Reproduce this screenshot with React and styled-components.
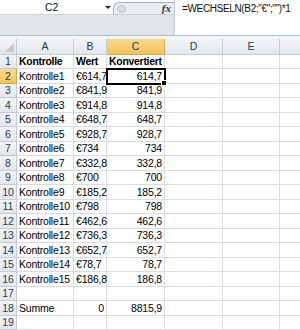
import React from "react";
import styled, { createGlobalStyle } from "styled-components";

const Global = createGlobalStyle`
  html, body { margin: 0; padding: 0; background: #ffffff; }
  body { width: 300px; height: 330px; overflow: hidden; font-family: "Liberation Sans", Arial, sans-serif; }
`;

const Page = styled.div`
  width: 300px;
  height: 330px;
  overflow: hidden;
  background: #ffffff;
  display: flex;
  flex-direction: column;
`;

const FormulaBar = styled.div`
  display: flex;
  height: 44px;
  border-bottom: 1px solid #b6bec9;
  box-sizing: border-box;
`;

const LeftPane = styled.div`
  width: 174px;
  display: flex;
  flex-direction: column;
  background: #e1e4e9;
  border-right: 1px solid #c3c9d1;
`;

const TopRow = styled.div`
  display: flex;
  height: 15px;
  background: #ffffff;
  border-bottom: 1px solid #cdd2d9;
  box-sizing: border-box;
`;

const NameBox = styled.div`
  width: 113px;
  position: relative;
  display: flex;
  align-items: center;
  font-size: 10.5px;
  color: #111;
  padding-left: 45px;
  box-sizing: border-box;
`;

const DropArrow = styled.span`
  position: absolute;
  left: 105px;
  top: 6px;
  width: 0;
  height: 0;
  border-left: 3px solid transparent;
  border-right: 3px solid transparent;
  border-top: 3px solid #222;
`;

const FxBox = styled.div`
  flex: 1;
  display: flex;
  align-items: flex-end;
  background: #ffffff;
`;

const Pill = styled.div`
  flex: 1;
  height: 11px;
  border: 1px solid #a9b1bc;
  border-right: none;
  border-bottom: none;
  border-radius: 6px 0 0 0;
  background: #e9ecf0;
  display: flex;
  align-items: center;
  justify-content: flex-end;
  padding-right: 3px;
  position: relative;
`;

const Knob = styled.span`
  position: absolute;
  left: 3px;
  top: 2px;
  width: 7px;
  height: 6px;
  border-radius: 50%;
  background: #d5dae1;
  border: 1px solid #c2c8d0;
`;

const Fx = styled.span`
  font-family: "Liberation Serif", "Times New Roman", serif;
  font-style: italic;
  font-weight: bold;
  font-size: 11px;
  color: #333;
  line-height: 1;
`;

const FormulaText = styled.div`
  flex: 1;
  background: #ffffff;
  font-size: 10px;
  letter-spacing: -0.35px;
  color: #111;
  padding: 3px 0 0 7px;
  white-space: nowrap;
`;

const Gap = styled.div`
  height: 3px;
  background: #f3f5f7;
`;

const Sheet = styled.div`
  display: grid;
  grid-template-columns: 17px 57px 33px 58px 58px 57px 40px;
  grid-template-rows: 16px;
  grid-auto-rows: 14.5px;
`;

const Cell = styled.div`
  box-sizing: border-box;
  border-right: 1px solid #d9dde3;
  border-bottom: 1px solid #d9dde3;
  font-size: 10.5px;
  font-weight: ${(p) => (p.$bold ? "bold" : "normal")};
  letter-spacing: ${(p) => (p.$bold ? "-0.3px" : "-0.2px")};
  color: #000;
  display: flex;
  align-items: center;
  justify-content: ${(p) => (p.$right ? "flex-end" : "flex-start")};
  padding: 0 2px 0 2px;
  white-space: nowrap;
  overflow: visible;
  position: relative;
`;

const Head = styled.div`
  box-sizing: border-box;
  background: ${(p) =>
    p.$active ? "linear-gradient(#f9d993, #f2c25c)" : "linear-gradient(#f1f3f6, #e3e7ec)"};
  border-right: 1px solid ${(p) => (p.$active ? "#e0a948" : "#c5cbd3")};
  border-bottom: 1px solid ${(p) => (p.$active ? "#e0a948" : "#c5cbd3")};
  color: #2b3b50;
  font-size: 10.5px;
  display: flex;
  align-items: center;
  justify-content: center;
  position: relative;
`;

const Corner = styled(Head)`
  &::after {
    content: "";
    position: absolute;
    right: 2px;
    bottom: 2px;
    width: 0;
    height: 0;
    border-left: 9px solid transparent;
    border-bottom: 9px solid #c8ccd2;
  }
`;

const Selected = styled(Cell)`
  outline: 2px solid #000;
  outline-offset: -1px;
  z-index: 2;
  &::after {
    content: "";
    position: absolute;
    right: -3px;
    bottom: -3px;
    width: 4px;
    height: 4px;
    background: #000;
    border: 1px solid #fff;
  }
`;

const rows = [
  ["Kontrolle1", "€614,7", "614,7"],
  ["Kontrolle2", "€841,9", "841,9"],
  ["Kontrolle3", "€914,8", "914,8"],
  ["Kontrolle4", "€648,7", "648,7"],
  ["Kontrolle5", "€928,7", "928,7"],
  ["Kontrolle6", "€734", "734"],
  ["Kontrolle7", "€332,8", "332,8"],
  ["Kontrolle8", "€700", "700"],
  ["Kontrolle9", "€185,2", "185,2"],
  ["Kontrolle10", "€798", "798"],
  ["Kontrolle11", "€462,6", "462,6"],
  ["Kontrolle12", "€736,3", "736,3"],
  ["Kontrolle13", "€652,7", "652,7"],
  ["Kontrolle14", "€78,7", "78,7"],
  ["Kontrolle15", "€186,8", "186,8"],
];

const Empties = () => (
  <>
    <Cell />
    <Cell />
    <Cell />
  </>
);

export default function App() {
  return (
    <Page>
      <Global />
      <FormulaBar>
        <LeftPane>
          <TopRow>
            <NameBox>
              C2
              <DropArrow />
            </NameBox>
            <FxBox>
              <Pill>
                <Knob />
                <Fx>fx</Fx>
              </Pill>
            </FxBox>
          </TopRow>
        </LeftPane>
        <FormulaText>=WECHSELN(B2;"€";"")*1</FormulaText>
      </FormulaBar>
      <Gap />
      <Sheet>
        <Corner />
        <Head>A</Head>
        <Head>B</Head>
        <Head $active>C</Head>
        <Head>D</Head>
        <Head>E</Head>
        <Head />

        <Head>1</Head>
        <Cell $bold>Kontrolle</Cell>
        <Cell $bold>Wert</Cell>
        <Cell $bold>Konvertiert</Cell>
        <Empties />

        {rows.map((r, i) => (
          <React.Fragment key={i}>
            <Head $active={i === 0}>{i + 2}</Head>
            <Cell>{r[0]}</Cell>
            <Cell>{r[1]}</Cell>
            {i === 0 ? <Selected $right>{r[2]}</Selected> : <Cell $right>{r[2]}</Cell>}
            <Empties />
          </React.Fragment>
        ))}

        <Head>17</Head>
        <Cell />
        <Cell />
        <Cell />
        <Empties />

        <Head>18</Head>
        <Cell>Summe</Cell>
        <Cell $right>0</Cell>
        <Cell $right>8815,9</Cell>
        <Empties />

        <Head>19</Head>
        <Cell />
        <Cell />
        <Cell />
        <Empties />
      </Sheet>
    </Page>
  );
}
